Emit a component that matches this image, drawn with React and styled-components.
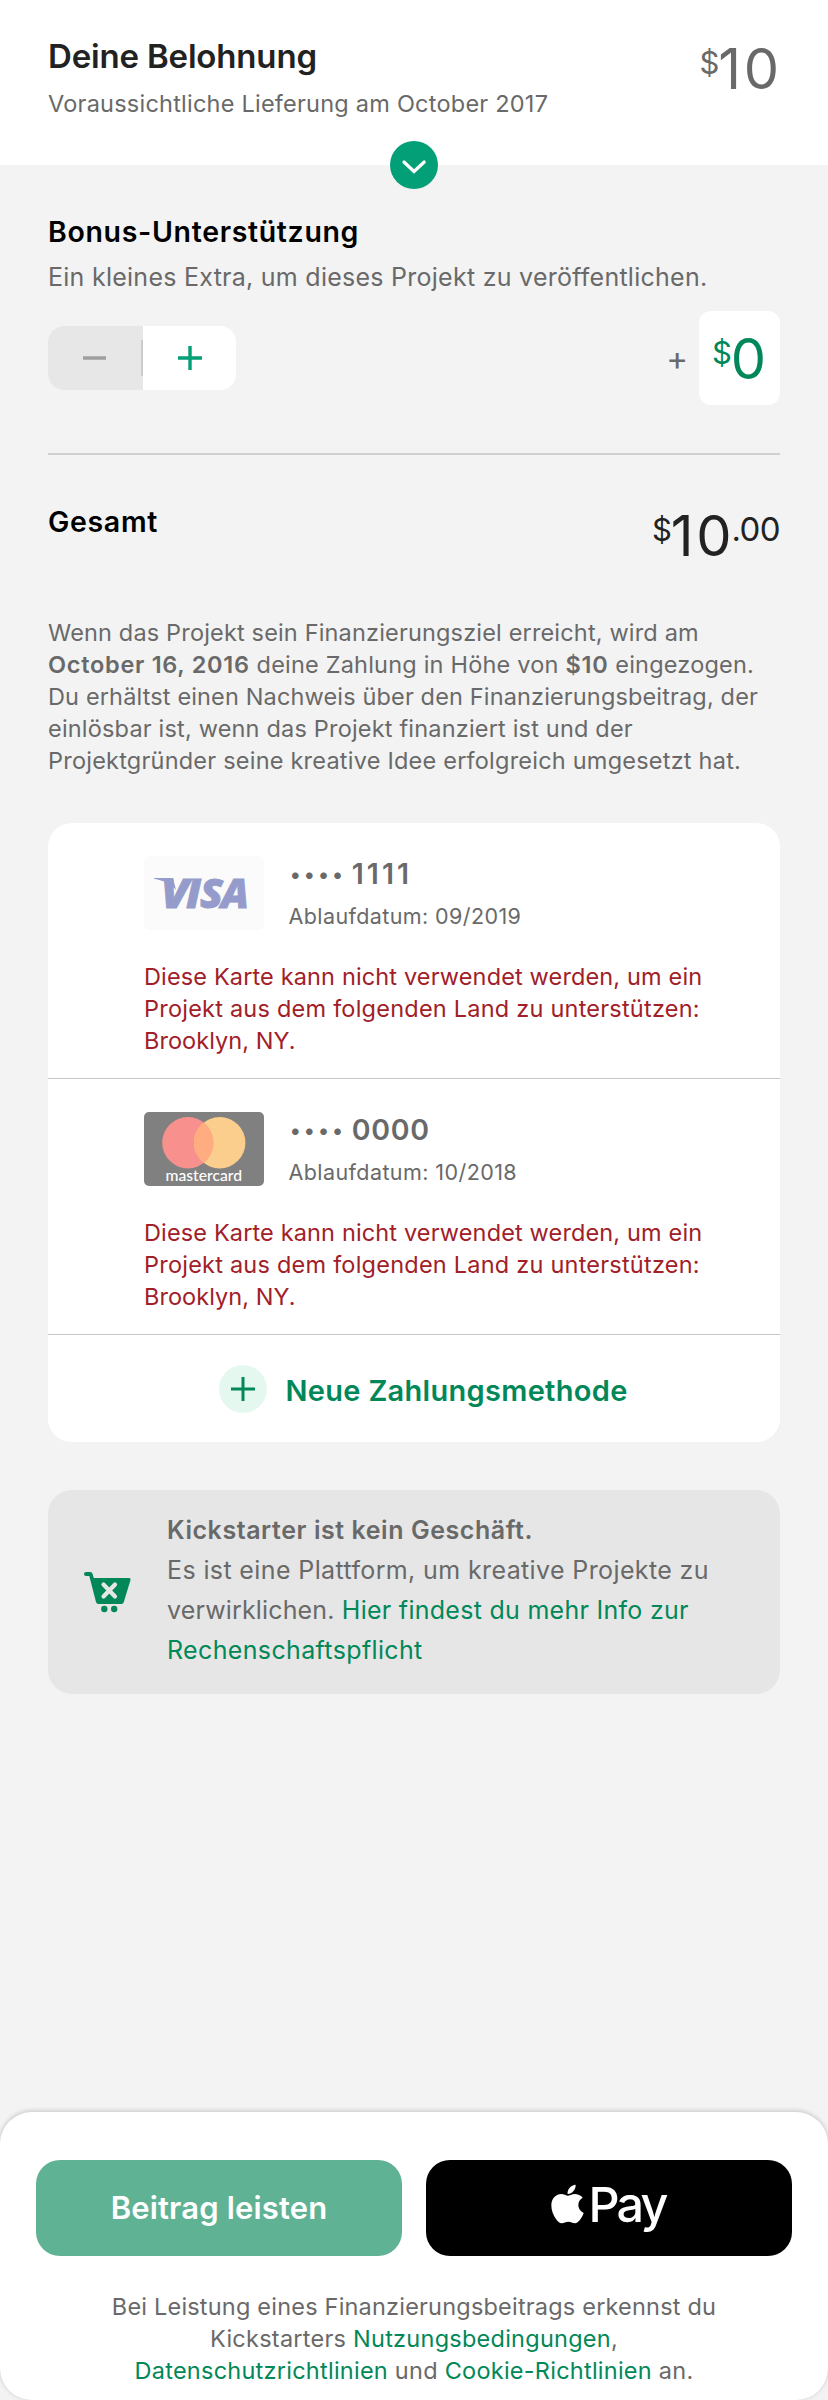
import React from "react";
import styled, { createGlobalStyle } from "styled-components";
import { FaApple } from "react-icons/fa";

const color = {
  page: "#f3f3f3",
  ink: "#222222",
  muted: "#696969",
  green: "#028858",
  teal: "#039f76",
  error: "#a12027",
  line: "#d0d0d0",
};

const GlobalStyle = createGlobalStyle`
  * { box-sizing: border-box; }
  body {
    margin: 0;
    background: ${color.page};
    font-family: Inter, "Liberation Sans", sans-serif;
    -webkit-font-smoothing: antialiased;
  }
`;

const Page = styled.div`
  display: flex;
  flex-direction: column;
  width: 828px;
  min-height: 2400px;
  background: ${color.page};
`;

const Header = styled.header`
  position: relative;
  display: flex;
  justify-content: space-between;
  align-items: flex-start;
  height: 165px;
  padding: 36px 48px 0;
  background: #fff;
`;

const Title = styled.h1`
  margin: 0 0 12px;
  font-size: 33px;
  font-weight: 600;
  line-height: 40px;
  letter-spacing: -0.17px;
  color: ${color.ink};
`;

const Subtitle = styled.p`
  margin: 0;
  font-size: ${(p) => p.$size || 23.5}px;
  line-height: 32px;
  letter-spacing: ${(p) => p.$ls}px;
  color: ${color.muted};
  white-space: nowrap;
`;

const Badge = styled.div`
  position: absolute;
  left: 390px;
  top: 141px;
  width: 48px;
  height: 48px;
  border-radius: 50%;
  background: ${color.teal};
  svg { display: block; }
`;

const Content = styled.main`
  display: flex;
  flex-direction: column;
  padding: 48px 48px 0;
`;

const SectionTitle = styled.h2`
  margin: 0;
  font-size: 28.5px;
  font-weight: 600;
  line-height: 37px;
  letter-spacing: 0.67px;
  color: #000;
`;

const Price = styled.div`
  display: flex;
  align-items: flex-start;
  margin: ${(p) => p.$margin || "1px 1px 0 0"};
  color: ${(p) => p.$color};
`;

const Currency = styled.span`
  margin: 6px -1px 0 0;
  font-size: 31px;
  line-height: 40px;
`;

const Amount = styled.span`
  margin-right: ${(p) => (p.$single ? 0 : -2.6)}px;
  font-size: 56px;
  line-height: 64px;
  letter-spacing: ${(p) => (p.$single ? 0 : 2.6)}px;
`;

const Cents = styled.span`
  margin-top: 5px;
  font-size: 33px;
  line-height: 40px;
  letter-spacing: -0.6px;
`;

const BonusRow = styled.div`
  display: flex;
  align-items: center;
  height: 94px;
  margin-top: 18px;
`;

const Stepper = styled.div`
  display: flex;
  width: 188px;
  height: 64px;
  margin-right: auto;
  border-radius: 16px;
  overflow: hidden;
  background: #fff;
`;

const StepButton = styled.button`
  display: flex;
  align-items: center;
  justify-content: center;
  flex: 1;
  padding: 0;
  border: 0;
  background: ${(p) => (p.$disabled ? "#e7e7e7" : "#fff")};
`;

const StepDivider = styled.span`
  display: flex;
  align-items: center;
  width: 2px;
  background: #e7e7e7;
  &::before {
    content: "";
    width: 2px;
    height: 36px;
    margin-top: -1px;
    background: #cbcbcb;
  }
`;

const PlusSign = styled.span`
  margin: 0 11px 0 0;
  font-size: 33px;
  line-height: 40px;
  color: ${color.muted};
`;

const AmountBox = styled.div`
  display: flex;
  align-items: center;
  justify-content: center;
  width: 81px;
  height: 94px;
  border-radius: 12px;
  background: #fff;
`;

const Divider = styled.hr`
  width: 100%;
  height: 2px;
  margin: 48px 0;
  border: 0;
  background: ${color.line};
`;

const TotalRow = styled.div`
  display: flex;
  justify-content: space-between;
  height: 64px;
`;

const Copy = styled.p`
  margin: ${(p) => p.$margin || 0};
  font-size: 23.5px;
  line-height: 32px;
  text-align: ${(p) => p.$align || "left"};
  color: ${(p) => p.$color || color.muted};
  b { font-weight: 600; }
`;

const Line = styled.span`
  display: block;
  white-space: nowrap;
  letter-spacing: ${(p) => p.$ls}px;
`;

const Run = styled.span`
  font-weight: ${(p) => p.$weight || 400};
  letter-spacing: ${(p) => p.$ls}px;
`;

const Link = styled.a`
  color: ${color.green};
  letter-spacing: ${(p) => p.$ls}px;
`;

const Wallet = styled.section`
  border-radius: 24px;
  overflow: hidden;
  background: #fff;
`;

const Method = styled.article`
  height: 256px;
  padding: 33px 24px 0 96px;
  border-bottom: 1px solid #c6c6c6;
`;

const MethodHead = styled.div`
  display: flex;
  gap: 24px;
  height: 74px;
  svg { display: block; flex: none; }
`;

const CardNumber = styled.div`
  display: flex;
  align-items: center;
  height: 36px;
  margin: 0 0 10px;
  font-size: 28.5px;
  font-weight: 600;
  line-height: 36px;
  letter-spacing: ${(p) => p.$ls}px;
  color: ${color.muted};
`;

const Dots = styled.span`
  margin: 2px 5.5px 0 2px;
  font-size: 21px;
  line-height: 34px;
  letter-spacing: 3.5px;
`;

const Expiry = styled.div`
  margin-left: 0.5px;
  font-size: 21.5px;
  line-height: 28px;
  letter-spacing: ${(p) => p.$ls}px;
  color: ${color.muted};
`;

const AddMethod = styled.button`
  display: flex;
  align-items: flex-start;
  gap: 18.5px;
  width: 100%;
  height: 107px;
  padding: 30px 0 0 171px;
  border: 0;
  background: #fff;
  font: 600 29px/40px Inter, "Liberation Sans", sans-serif;
  letter-spacing: 0.3px;
  color: ${color.green};
`;

const AddIcon = styled.span`
  display: flex;
  align-items: center;
  justify-content: center;
  width: 48px;
  height: 48px;
  border-radius: 50%;
  background: #e5f8f0;
`;

const AddLabel = styled.span`
  margin-top: 6px;
`;

const Notice = styled.aside`
  display: flex;
  align-items: center;
  height: 204px;
  margin-top: 48px;
  padding-left: 36px;
  border-radius: 24px;
  background: #e6e6e6;
  svg { flex: none; }
`;

const NoticeText = styled.p`
  margin: 0 0 4px 35px;
  font-size: 25px;
  line-height: 40px;
  color: ${color.muted};
`;

const Footer = styled.footer`
  height: 288px;
  margin-top: auto;
  padding: 48px 36px 0;
  border-radius: 32px;
  background: #fff;
  box-shadow: 0 -1px 5px rgba(0, 0, 0, 0.2);
`;

const Actions = styled.div`
  display: grid;
  grid-template-columns: 1fr 1fr;
  gap: 24px;
`;

const ActionButton = styled.button`
  display: flex;
  align-items: center;
  justify-content: center;
  height: 96px;
  padding: 0;
  border: 0;
  border-radius: 24px;
  background: ${(p) => p.$bg};
  color: #fff;
  font: 600 31px/40px Inter, "Liberation Sans", sans-serif;
  letter-spacing: 0.15px;
`;

const AppleMark = styled(FaApple)`
  width: 33px;
  height: 44px;
  margin: 0 5px 9px -2px;
`;

const PayLabel = styled.span`
  margin-bottom: 7px;
  font-size: 48.5px;
  font-weight: 500;
  line-height: 56px;
  letter-spacing: -2.9px;
`;

const PlusIcon = ({ size, stroke, tone }) => (
  <svg width={size} height={size} viewBox={`0 0 ${size} ${size}`}>
    <path
      d={`M0 ${size / 2}H${size}M${size / 2} 0V${size}`}
      stroke={tone}
      strokeWidth={stroke}
    />
  </svg>
);

const VisaLogo = () => (
  <svg width="120" height="74" viewBox="0 0 120 74">
    <rect width="120" height="74" rx="5" fill="#fbfbfb" />
    <path d="M10 22H29L32 34C27 28 20 24.500 10 22.800Z" fill="#959bca" />
    <g
      fill="#959bca"
      stroke="#959bca"
      strokeWidth="0.8"
      fontFamily="'Open Sans', sans-serif"
      fontWeight="800"
      fontStyle="italic"
      fontSize="41"
    >
      <text x="17" y="51.500" textLength="28" lengthAdjust="spacingAndGlyphs">V</text>
      <text x="42" y="51.500" textLength="15" lengthAdjust="spacingAndGlyphs">I</text>
      <text x="56" y="51.500" textLength="23" lengthAdjust="spacingAndGlyphs">S</text>
      <text x="77" y="51.500" textLength="28" lengthAdjust="spacingAndGlyphs">A</text>
    </g>
  </svg>
);

const MastercardLogo = () => (
  <svg width="120" height="74" viewBox="0 0 120 74">
    <rect width="120" height="74" rx="5" fill="#808080" />
    <circle cx="43.900" cy="30.700" r="25.700" fill="#f8908d" />
    <circle cx="75.700" cy="30.700" r="25.700" fill="#fbce8d" />
    <path
      d="M59.800 10.510A25.700 25.700 0 0 1 59.800 50.890A25.700 25.700 0 0 1 59.800 10.510Z"
      fill="#ffad80"
    />
    <text
      x="21.500"
      y="69"
      fill="#fff"
      fontFamily="Lato, sans-serif"
      fontSize="15.500"
      fontWeight="500"
      textLength="76.500"
      lengthAdjust="spacingAndGlyphs"
    >
      mastercard
    </text>
  </svg>
);

const CartIcon = () => (
  <svg width="48" height="42" viewBox="0 0 48 42">
    <path
      d="M2 1H6.500Q8 1 8.500 2.700L9.800 7H45Q47 7 46.500 9L39.800 31Q39.300 33 37.500 33H14.500Q12.500 33 12 31L5.300 5H2A2 2 0 0 1 2 1Z"
      fill={color.green}
    />
    <path d="M19.500 13.500L31 25.500M31 13.500L19.500 25.500" stroke="#e6e6e6" strokeWidth="4.200" strokeLinecap="round" />
    <circle cx="20.300" cy="38" r="3.200" fill={color.green} />
    <circle cx="30.200" cy="38" r="3.200" fill={color.green} />
  </svg>
);

const methods = [
  { logo: <VisaLogo />, digits: "1111", digitsLs: 3, expiry: "Ablaufdatum: 09/2019", expiryLs: 0.4 },
  { logo: <MastercardLogo />, digits: "0000", digitsLs: 0.7, expiry: "Ablaufdatum: 10/2018", expiryLs: 0.42 },
];

export default function App() {
  return (
    <>
      <GlobalStyle />
      <Page>
        <Header>
          <div>
            <Title>Deine Belohnung</Title>
            <Subtitle $ls={0.23}>Voraussichtliche Lieferung am October 2017</Subtitle>
          </div>
          <Price $color={color.muted}>
            <Currency>$</Currency>
            <Amount>10</Amount>
          </Price>
          <Badge>
            <svg width="48" height="48" viewBox="0 0 48 48">
              <path
                d="M14 21L24 30.500L34.200 21"
                fill="none"
                stroke="#fff"
                strokeWidth="3.200"
                strokeLinecap="round"
              />
            </svg>
          </Badge>
        </Header>

        <Content>
          <SectionTitle>Bonus-Unterstützung</SectionTitle>
          <Copy as="div" $margin="11px 0 0">
            <Subtitle $size={25} $ls={0.26}>
              Ein kleines Extra, um dieses Projekt zu veröffentlichen.
            </Subtitle>
          </Copy>

          <BonusRow>
            <Stepper>
              <StepButton $disabled aria-label="Weniger">
                <svg width="23" height="4" viewBox="0 0 23 4">
                  <path d="M0 2H23" stroke="#9da09f" strokeWidth="3.500" />
                </svg>
              </StepButton>
              <StepDivider />
              <StepButton aria-label="Mehr">
                <PlusIcon size={24} stroke={3.4} tone={color.teal} />
              </StepButton>
            </Stepper>
            <PlusSign>+</PlusSign>
            <AmountBox>
              <Price $color={color.green} $margin="1px 1px 0 0">
                <Currency>$</Currency>
                <Amount $single>0</Amount>
              </Price>
            </AmountBox>
          </BonusRow>

          <Divider />

          <TotalRow>
            <SectionTitle>Gesamt</SectionTitle>
            <Price $color={color.ink} $margin="1px 0 0">
              <Currency>$</Currency>
              <Amount>10</Amount>
              <Cents>.00</Cents>
            </Price>
          </TotalRow>

          <Copy $margin="50px 0 46px">
            <Line $ls={0.164}>Wenn das Projekt sein Finanzierungsziel erreicht, wird am</Line>
            <Line $ls={0.2}>
              <Run $weight={600} $ls={0.72}>October 16, 2016</Run> deine Zahlung in Höhe von{" "}
              <Run $weight={600} $ls={0.8}>$10</Run> eingezogen.
            </Line>
            <Line $ls={0.144}>Du erhältst einen Nachweis über den Finanzierungsbeitrag, der</Line>
            <Line $ls={0.185}>einlösbar ist, wenn das Projekt finanziert ist und der</Line>
            <Line $ls={0.22}>Projektgründer seine kreative Idee erfolgreich umgesetzt hat.</Line>
          </Copy>

          <Wallet>
            {methods.map((m) => (
              <Method key={m.digits}>
                <MethodHead>
                  {m.logo}
                  <div>
                    <CardNumber $ls={m.digitsLs}>
                      <Dots>••••</Dots>
                      {m.digits}
                    </CardNumber>
                    <Expiry $ls={m.expiryLs}>{m.expiry}</Expiry>
                  </div>
                </MethodHead>
                <Copy $margin="31px 0 0" $color={color.error}>
                  <Line $ls={0.14}>Diese Karte kann nicht verwendet werden, um ein</Line>
                  <Line $ls={0.225}>Projekt aus dem folgenden Land zu unterstützen:</Line>
                  <Line $ls={0.05}>Brooklyn, NY.</Line>
                </Copy>
              </Method>
            ))}
            <AddMethod>
              <AddIcon>
                <PlusIcon size={24} stroke={3} tone={color.green} />
              </AddIcon>
              <AddLabel>Neue Zahlungsmethode</AddLabel>
            </AddMethod>
          </Wallet>

          <Notice>
            <CartIcon />
            <NoticeText>
              <Line $ls={0.56}>
                <Run $weight={600} $ls={0.56}>Kickstarter ist kein Geschäft.</Run>
              </Line>
              <Line $ls={0.38}>Es ist eine Plattform, um kreative Projekte zu</Line>
              <Line $ls={0.15}>
                verwirklichen. <Link $ls={0.28}>Hier findest du mehr Info zur</Link>
              </Line>
              <Line $ls={0.36}>
                <Link $ls={0.36}>Rechenschaftspflicht</Link>
              </Line>
            </NoticeText>
          </Notice>
        </Content>

        <Footer>
          <Actions>
            <ActionButton $bg="#5fb394">Beitrag leisten</ActionButton>
            <ActionButton $bg="#000" aria-label="Apple Pay">
              <AppleMark />
              <PayLabel>Pay</PayLabel>
            </ActionButton>
          </Actions>
          <Copy $margin="35px 0 0" $align="center">
            <Line $ls={0.2}>Bei Leistung eines Finanzierungsbeitrags erkennst du</Line>
            <Line $ls={0.25}>
              Kickstarters <Link $ls={0.25}>Nutzungsbedingungen</Link>,
            </Line>
            <Line $ls={0.25}>
              <Link $ls={0.25}>Datenschutzrichtlinien</Link> und <Link $ls={0.25}>Cookie-Richtlinien</Link> an.
            </Line>
          </Copy>
        </Footer>
      </Page>
    </>
  );
}
